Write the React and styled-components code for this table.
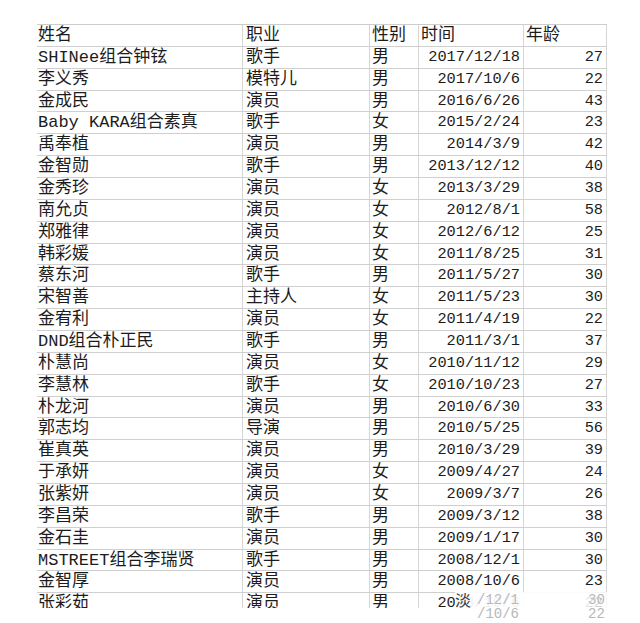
import React from "react";
import styled, { createGlobalStyle } from "styled-components";

const Global = createGlobalStyle`
  html, body { margin: 0; padding: 0; background: #ffffff; }
  body { width: 640px; height: 623px; overflow: hidden; }
`;

const Page = styled.div`
  position: relative;
  width: 640px;
  height: 623px;
  background: #fff;
  padding: 24px 0 0 37px;
  box-sizing: border-box;
`;

const Sheet = styled.div`
  width: 570px;
  height: 584px;
  overflow: hidden;
  border-top: 1px solid #cdcdcd;
  box-sizing: border-box;
`;

const Row = styled.div`
  display: grid;
  grid-template-columns: 206px 127px 49px 105px 83px;
  height: 21.87px;
  box-sizing: border-box;
  border-bottom: 1px solid #cfcfcf;
`;

const Cell = styled.div`
  box-sizing: border-box;
  border-right: 1px solid #d6d6d6;
  padding: 0 ${(p) => (p.$right ? "3px" : "0")} 0 ${(p) => p.$pad || 1}px;
  text-align: ${(p) => (p.$right ? "right" : "left")};
  font-family: "Liberation Mono", "Noto Sans CJK SC", monospace;
  font-size: ${(p) => (p.$num ? "15.3px" : "17px")};
  line-height: 21.5px;
  color: #1c1c1c;
  white-space: nowrap;
  overflow: hidden;
`;

const Watermark = styled.div`
  position: absolute;
  left: 455px;
  top: 592px;
  width: 175px;
  height: 26px;
  background: linear-gradient(to right, rgba(255,255,255,0.92), rgba(255,255,255,0.95) 70%, rgba(255,255,255,0.6));
  font-family: "Liberation Mono", "Noto Sans CJK SC", monospace;
  font-size: 15px;
  color: #b4b4b4;
`;

const Mark = styled.span`
  position: absolute;
  left: ${(p) => p.$x}px;
  top: ${(p) => p.$y}px;
  line-height: 14px;
  color: ${(p) => (p.$dark ? "#3a3a3a" : "#b8b8b8")};
  font-size: ${(p) => (p.$dark ? "16px" : "14px")};
`;

const rows = [
  ["SHINee组合钟铉", "歌手", "男", "2017/12/18", "27"],
  ["李义秀", "模特儿", "男", "2017/10/6", "22"],
  ["金成民", "演员", "男", "2016/6/26", "43"],
  ["Baby KARA组合素真", "歌手", "女", "2015/2/24", "23"],
  ["禹奉植", "演员", "男", "2014/3/9", "42"],
  ["金智勋", "歌手", "男", "2013/12/12", "40"],
  ["金秀珍", "演员", "女", "2013/3/29", "38"],
  ["南允贞", "演员", "女", "2012/8/1", "58"],
  ["郑雅律", "演员", "女", "2012/6/12", "25"],
  ["韩彩媛", "演员", "女", "2011/8/25", "31"],
  ["蔡东河", "歌手", "男", "2011/5/27", "30"],
  ["宋智善", "主持人", "女", "2011/5/23", "30"],
  ["金宥利", "演员", "女", "2011/4/19", "22"],
  ["DND组合朴正民", "歌手", "男", "2011/3/1", "37"],
  ["朴慧尚", "演员", "女", "2010/11/12", "29"],
  ["李慧林", "歌手", "女", "2010/10/23", "27"],
  ["朴龙河", "演员", "男", "2010/6/30", "33"],
  ["郭志均", "导演", "男", "2010/5/25", "56"],
  ["崔真英", "演员", "男", "2010/3/29", "39"],
  ["于承妍", "演员", "女", "2009/4/27", "24"],
  ["张紫妍", "演员", "女", "2009/3/7", "26"],
  ["李昌荣", "歌手", "男", "2009/3/12", "38"],
  ["金石圭", "演员", "男", "2009/1/17", "30"],
  ["MSTREET组合李瑞贤", "歌手", "男", "2008/12/1", "30"],
  ["金智厚", "演员", "男", "2008/10/6", "23"],
  ["张彩茹", "演员", "男", "2008/10/6", "22"],
];

export default function App() {
  return (
    <Page>
      <Global />
      <Sheet>
        <Row>
          <Cell>姓名</Cell>
          <Cell $pad={3}>职业</Cell>
          <Cell $pad={2}>性别</Cell>
          <Cell $pad={2}>时间</Cell>
          <Cell $pad={2}>年龄</Cell>
        </Row>
        {rows.map((r, i) => (
          <Row key={i}>
            <Cell>{r[0]}</Cell>
            <Cell $pad={3}>{r[1]}</Cell>
            <Cell $pad={2}>{r[2]}</Cell>
            <Cell $num $right>{r[3]}</Cell>
            <Cell $num $right>{r[4]}</Cell>
          </Row>
        ))}
      </Sheet>
      <Watermark>
        <Mark $dark $x={0} $y={3}>淡</Mark>
        <Mark $x={22} $y={1}>/12/1</Mark>
        <Mark $x={133} $y={1}>30</Mark>
        <Mark $x={22} $y={15}>/10/6</Mark>
        <Mark $x={133} $y={15}>22</Mark>
      </Watermark>
    </Page>
  );
}
